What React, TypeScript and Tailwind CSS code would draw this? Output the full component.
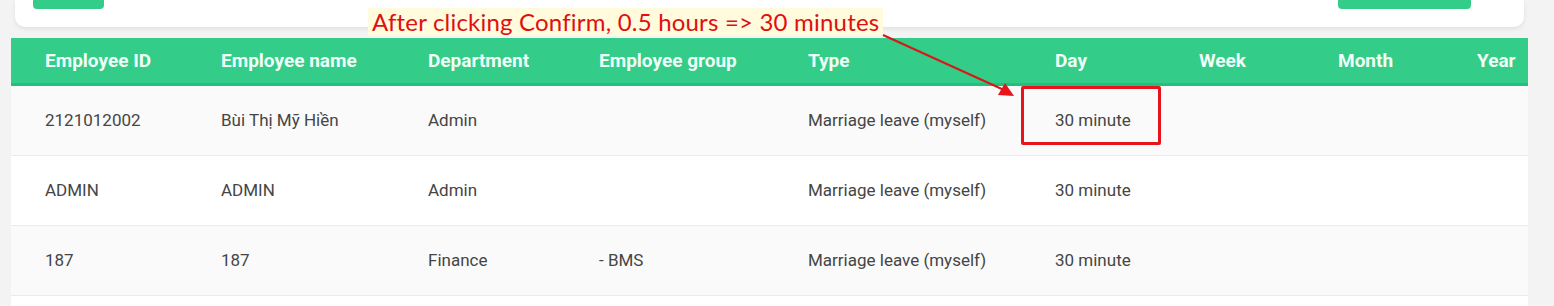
const columns = [
  { label: 'Employee ID', w: 'w-[176px]' },
  { label: 'Employee name', w: 'w-[207px]' },
  { label: 'Department', w: 'w-[171px]' },
  { label: 'Employee group', w: 'w-[209px]' },
  { label: 'Type', w: 'w-[247px]' },
  { label: 'Day', w: 'w-[144px]' },
  { label: 'Week', w: 'w-[139px]' },
  { label: 'Month', w: 'w-[139px]' },
  { label: 'Year', w: 'w-[85px]' },
];

const rows = [
  ['2121012002', 'Bùi Thị Mỹ Hiền', 'Admin', '', 'Marriage leave (myself)', '30 minute', '', '', ''],
  ['ADMIN', 'ADMIN', 'Admin', '', 'Marriage leave (myself)', '30 minute', '', '', ''],
  ['187', '187', 'Finance', '- BMS', 'Marriage leave (myself)', '30 minute', '', '', ''],
  ['', '', '', '', '', '', '', '', ''],
];

export default function App() {
  return (
    <div className="relative h-[306px] overflow-hidden bg-[#f3f3f3] font-['Roboto',sans-serif]">
      {/* top toolbar card (cut off) */}
      <div className="ml-[15px] flex h-[27px] w-[1509px] justify-between rounded-b-[10px] bg-white px-[18px] shadow-[0_2px_4px_rgba(0,0,0,0.08)]">
        <div className="h-[9px] w-[71px] rounded-b-[4px] bg-[#33cc88]" />
        <div className="mr-[35px] h-[9px] w-[133px] rounded-b-[4px] bg-[#33cc88]" />
      </div>

      <div className="ml-[11px] mt-[11px] w-[1517px]">
        <div className="flex h-[48px] items-center border-b-[3px] border-[#22c07c] bg-[#33cc88] pt-[2px]">
          {columns.map((c) => (
            <div key={c.label} className={`${c.w} pl-[34px] text-[19px] font-bold text-[#effff6]`}>
              {c.label}
            </div>
          ))}
        </div>
        {rows.map((r, i) => (
          <div
            key={i}
            className={`flex h-[70px] items-center border-b border-[#ebebeb] pb-[2px] ${i % 2 === 0 ? 'bg-[#fafafa]' : 'bg-white'}`}
          >
            {r.map((v, j) => (
              <div key={j} className={`${columns[j].w} relative pl-[34px] text-[17px] leading-[24px] text-[#454545]`}>
                {v}
                {i === 0 && j === 5 && (
                  <div className="absolute left-0 top-[-22px] h-[59px] w-[140px] rounded-[2px] border-[3px] border-[#e8141c]" />
                )}
              </div>
            ))}
          </div>
        ))}
      </div>

      {/* annotation */}
      <div className="absolute left-[368px] top-[8px] bg-[#fffbdc] px-[4px] font-['Lato',sans-serif] text-[24px] leading-[28px] tracking-[0.2px] text-[#e01010]">
        After clicking Confirm, 0.5 hours =&gt; 30 minutes
      </div>
      <svg className="absolute left-0 top-0" width="1554" height="306">
        <line x1="883" y1="35" x2="1004" y2="90" stroke="#d81818" strokeWidth="2" />
        <polygon points="1014,96 998,95 1005,83" fill="#e8141c" />
      </svg>
    </div>
  );
}
